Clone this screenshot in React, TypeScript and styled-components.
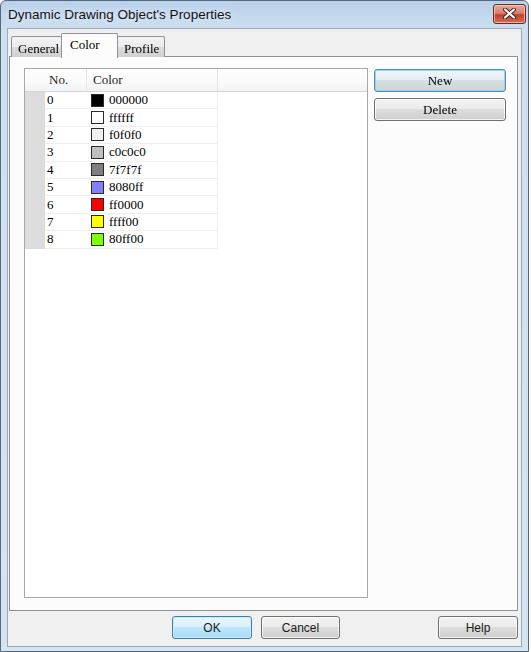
import React from 'react';
import styled, { createGlobalStyle, css } from 'styled-components';

const GlobalStyle = createGlobalStyle`
  html, body {
    margin: 0;
    padding: 0;
    background: #ffffff;
  }
  #root {
    width: 531px;
    height: 652px;
  }
`;

const SERIF = `"Liberation Serif", "DejaVu Serif", serif`;
const SANS = `"Liberation Sans", "DejaVu Sans", sans-serif`;

const Window = styled.div`
  box-sizing: border-box;
  width: 529px;
  height: 652px;
  display: flex;
  flex-direction: column;
  padding: 0 6px 4px 6px;
  background: linear-gradient(180deg, #b9d1ea 0px, #cddff0 28px, #d6e4f2 100%);
  border: 1px solid #56687c;
  border-radius: 6px 6px 0 0;
`;

const TitleBar = styled.div`
  height: 27px;
  display: flex;
  align-items: center;
  justify-content: space-between;
`;

const Title = styled.span`
  padding-left: 1px;
  margin-top: -1px;
  font-family: ${SANS};
  font-size: 13.5px;
  color: #111;
  text-shadow: 0 0 6px rgba(255, 255, 255, 0.9);
`;

const CloseButton = styled.div`
  box-sizing: border-box;
  width: 33px;
  height: 20px;
  margin-right: -4px;
  margin-top: -2px;
  display: flex;
  align-items: center;
  justify-content: center;
  border: 1px solid #6b2a22;
  border-radius: 3px;
  background: linear-gradient(180deg, #e9a99b 0%, #d9806e 45%, #c0412c 55%, #d3705a 100%);
  box-shadow: inset 0 0 0 1px rgba(255, 220, 210, 0.6);
`;

const Client = styled.div`
  flex: 1;
  display: flex;
  flex-direction: column;
  background: #f0f0f0;
  border: 1px solid #9aaabb;
`;

const TabStrip = styled.div`
  height: 24px;
  margin-top: 4px;
  padding-left: 3px;
  display: flex;
  align-items: flex-end;
  position: relative;
  z-index: 1;
`;

const Tab = styled.div<{ $active?: boolean; $w: number }>`
  box-sizing: border-box;
  width: ${(p) => p.$w}px;
  height: 21px;
  margin-left: -1px;
  padding: 4px 0 0 6px;
  font-family: ${SERIF};
  font-size: 13px;
  line-height: 15px;
  color: #000;
  border: 1px solid #8e939b;
  border-bottom: none;
  border-radius: 2px 2px 0 0;
  background: linear-gradient(180deg, #f3f3f3 0%, #ebebeb 50%, #dddddd 51%, #cfcfcf 100%);
  transform: translateZ(0);
  &:first-child {
    margin-left: 0;
  }
  ${(p) =>
    p.$active &&
    css`
      height: 25px;
      margin-bottom: -1px;
      padding: 3px 0 0 8px;
      background: #fcfcfc;
      z-index: 2;
    `}
`;

const Panel = styled.div`
  height: 555px;
  box-sizing: border-box;
  margin: -1px 3px 0 1px;
  padding: 11px 10px 12px 14px;
  display: flex;
  gap: 6px;
  align-items: flex-start;
  background: #fcfcfc;
  border: 1px solid #8e939b;
`;

const ListBox = styled.div`
  box-sizing: border-box;
  width: 344px;
  height: 530px;
  background: #ffffff;
  border: 1px solid #a4a8ae;
  display: flex;
  flex-direction: column;
`;

const HeaderRow = styled.div`
  height: 22px;
  display: flex;
  background: linear-gradient(180deg, #ffffff 0%, #fafafa 60%, #f1f2f4 100%);
  border-bottom: 1px solid #d5d5d5;
`;

const HeaderCell = styled.div<{ $w?: number; $pad?: number; $divider?: boolean }>`
  box-sizing: border-box;
  ${(p) => (p.$w ? `width: ${p.$w}px;` : 'flex: 1;')}
  padding-left: ${(p) => p.$pad ?? 0}px;
  display: flex;
  align-items: center;
  font-family: ${SERIF};
  font-size: 13px;
  color: #1e1e1e;
  ${(p) => p.$divider && 'border-right: 1px solid #e3e5e8;'}
`;

const Row = styled.div`
  height: 17.4px;
  display: flex;
`;

const RowHead = styled.div`
  width: 20px;
  background: #dcdcdc;
`;

const NumCell = styled.div`
  box-sizing: border-box;
  width: 42px;
  padding-left: 2px;
  display: flex;
  align-items: center;
  font-family: ${SERIF};
  font-size: 13px;
  color: #000;
  border-bottom: 1px solid #eeeeee;
`;

const ColorCell = styled.div`
  box-sizing: border-box;
  width: 131px;
  padding-left: 4px;
  display: flex;
  align-items: center;
  gap: 5px;
  font-family: ${SERIF};
  font-size: 13px;
  color: #000;
  border-bottom: 1px solid #eeeeee;
  border-right: 1px solid #eeeeee;
`;

const Swatch = styled.span<{ $color: string }>`
  box-sizing: border-box;
  width: 13px;
  height: 13px;
  background: ${(p) => p.$color};
  border: 1px solid #2a2a2a;
`;

const SideButtons = styled.div`
  display: flex;
  flex-direction: column;
  gap: 6px;
  margin-top: 1px;
`;

const buttonLook = css<{ $default?: boolean }>`
  box-sizing: border-box;
  height: 23px;
  display: flex;
  align-items: center;
  justify-content: center;
  color: #000;
  border: 1px solid #707070;
  border-radius: 3px;
  background: linear-gradient(180deg, #f2f2f2 0%, #ebebeb 49%, #dddddd 50%, #cfcfcf 100%);
  box-shadow: inset 0 0 0 1px rgba(255, 255, 255, 0.7);
  ${(p) =>
    p.$default &&
    css`
      border-color: #3c7fb1;
      background: linear-gradient(180deg, #eaf6fd 0%, #d9f0fc 49%, #bee6fd 50%, #a7d9f5 100%);
      box-shadow: inset 0 0 0 1px rgba(200, 235, 250, 0.9);
    `}
`;

const PushButton = styled.div<{ $default?: boolean }>`
  ${buttonLook}
  width: 132px;
  font-family: ${SERIF};
  font-size: 13px;
  line-height: 15px;
  transform: translateZ(0);
  ${(p) =>
    p.$default &&
    css`
      background: linear-gradient(180deg, #f0f5f8 0%, #e6edf1 49%, #d6dfe4 50%, #cbd5db 100%);
      border-color: #4a8fb8;
      box-shadow: inset 0 0 0 1px #9fd3ec;
    `}
`;

const Footer = styled.div`
  display: flex;
  justify-content: flex-end;
  gap: 9px;
  padding: 5px 3px 0 0;
`;

const DialogButton = styled.div<{ $default?: boolean; $w: number; $gapBefore?: number }>`
  ${buttonLook}
  width: ${(p) => p.$w}px;
  margin-left: ${(p) => p.$gapBefore ?? 0}px;
  font-family: ${SANS};
  font-size: 12px;
  color: #1a1a1a;
`;

const rows = ['000000', 'ffffff', 'f0f0f0', 'c0c0c0', '7f7f7f', '8080ff', 'ff0000', 'ffff00', '80ff00'];

export default function App() {
  return (
    <>
      <GlobalStyle />
      <Window>
        <TitleBar>
          <Title>Dynamic Drawing Object's Properties</Title>
          <CloseButton aria-label="Close">
            <svg width="13" height="11" viewBox="0 0 13 11">
              <path
                d="M2 1.5 L11 9.5 M11 1.5 L2 9.5"
                stroke="#4a1a14"
                strokeWidth="4"
                strokeLinecap="round"
              />
              <path
                d="M2 1.5 L11 9.5 M11 1.5 L2 9.5"
                stroke="#ffffff"
                strokeWidth="2.2"
                strokeLinecap="round"
              />
            </svg>
          </CloseButton>
        </TitleBar>
        <Client>
          <TabStrip>
            <Tab $w={51}>General</Tab>
            <Tab $w={57} $active>
              Color
            </Tab>
            <Tab $w={48}>Profile</Tab>
          </TabStrip>
          <Panel>
            <ListBox>
              <HeaderRow>
                <HeaderCell $w={20} />
                <HeaderCell $w={42} $pad={4} $divider>
                  No.
                </HeaderCell>
                <HeaderCell $w={131} $pad={6} $divider>
                  Color
                </HeaderCell>
                <HeaderCell />
              </HeaderRow>
              {rows.map((hex, i) => (
                <Row key={hex}>
                  <RowHead />
                  <NumCell>{i}</NumCell>
                  <ColorCell>
                    <Swatch $color={`#${hex}`} />
                    {hex}
                  </ColorCell>
                </Row>
              ))}
            </ListBox>
            <SideButtons>
              <PushButton $default>New</PushButton>
              <PushButton>Delete</PushButton>
            </SideButtons>
          </Panel>
          <Footer>
            <DialogButton $default $w={80}>
              OK
            </DialogButton>
            <DialogButton $w={79}>Cancel</DialogButton>
            <DialogButton $w={80} $gapBefore={89}>
              Help
            </DialogButton>
          </Footer>
        </Client>
      </Window>
    </>
  );
}
